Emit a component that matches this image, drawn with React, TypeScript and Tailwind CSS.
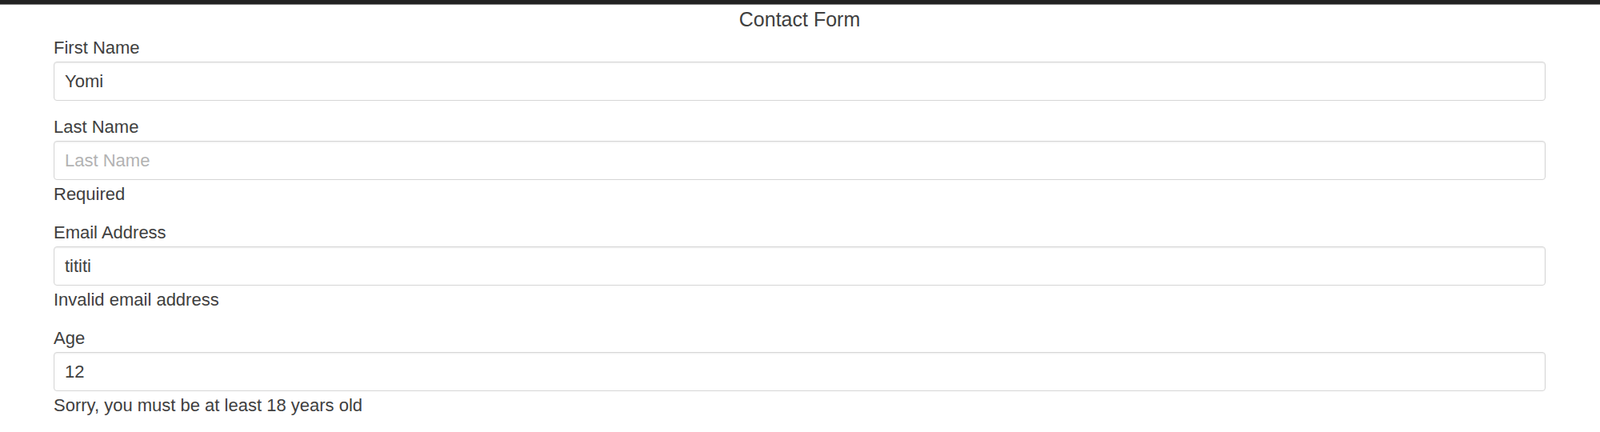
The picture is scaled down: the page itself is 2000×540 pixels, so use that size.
const fields = [
  { id: 'firstName', label: 'First Name', value: 'Yomi', placeholder: 'First Name', error: '' },
  { id: 'lastName', label: 'Last Name', value: '', placeholder: 'Last Name', error: 'Required' },
  { id: 'email', label: 'Email Address', value: 'tititi', placeholder: 'Email Address', error: 'Invalid email address' },
  { id: 'age', label: 'Age', value: '12', placeholder: 'Age', error: 'Sorry, you must be at least 18 years old' },
];

export default function App() {
  return (
    <div className="min-h-screen bg-white font-['Liberation_Sans',Arial,sans-serif] text-[#404040]">
      <div className="h-[6px] bg-[#222] border-b border-[#777]" />

      <form className="pl-[67px] pr-[68px]" onSubmit={(e) => e.preventDefault()}>
        <h1 className="text-center text-[25px] leading-[36px] font-normal mb-[2px]">Contact Form</h1>

        {fields.map((f) => (
          <div key={f.id} className="mb-[17px]">
            <label htmlFor={f.id} className="block text-[22px] leading-[31px] mb-[2px]">
              {f.label}
            </label>
            <input
              id={f.id}
              readOnly
              defaultValue={f.value}
              placeholder={f.placeholder}
              className="block w-full h-[49px] px-[13px] text-[22px] text-[#404040] bg-white border border-[#d6d6d6] rounded-[4px] shadow-[inset_0_1px_2px_rgba(0,0,0,0.08)] placeholder:text-[#b3b3b3] outline-none"
            />
            {f.error && <div className="text-[22px] leading-[31px] mt-[2px] mb-[4.5px]">{f.error}</div>}
          </div>
        ))}
      </form>
    </div>
  );
}
